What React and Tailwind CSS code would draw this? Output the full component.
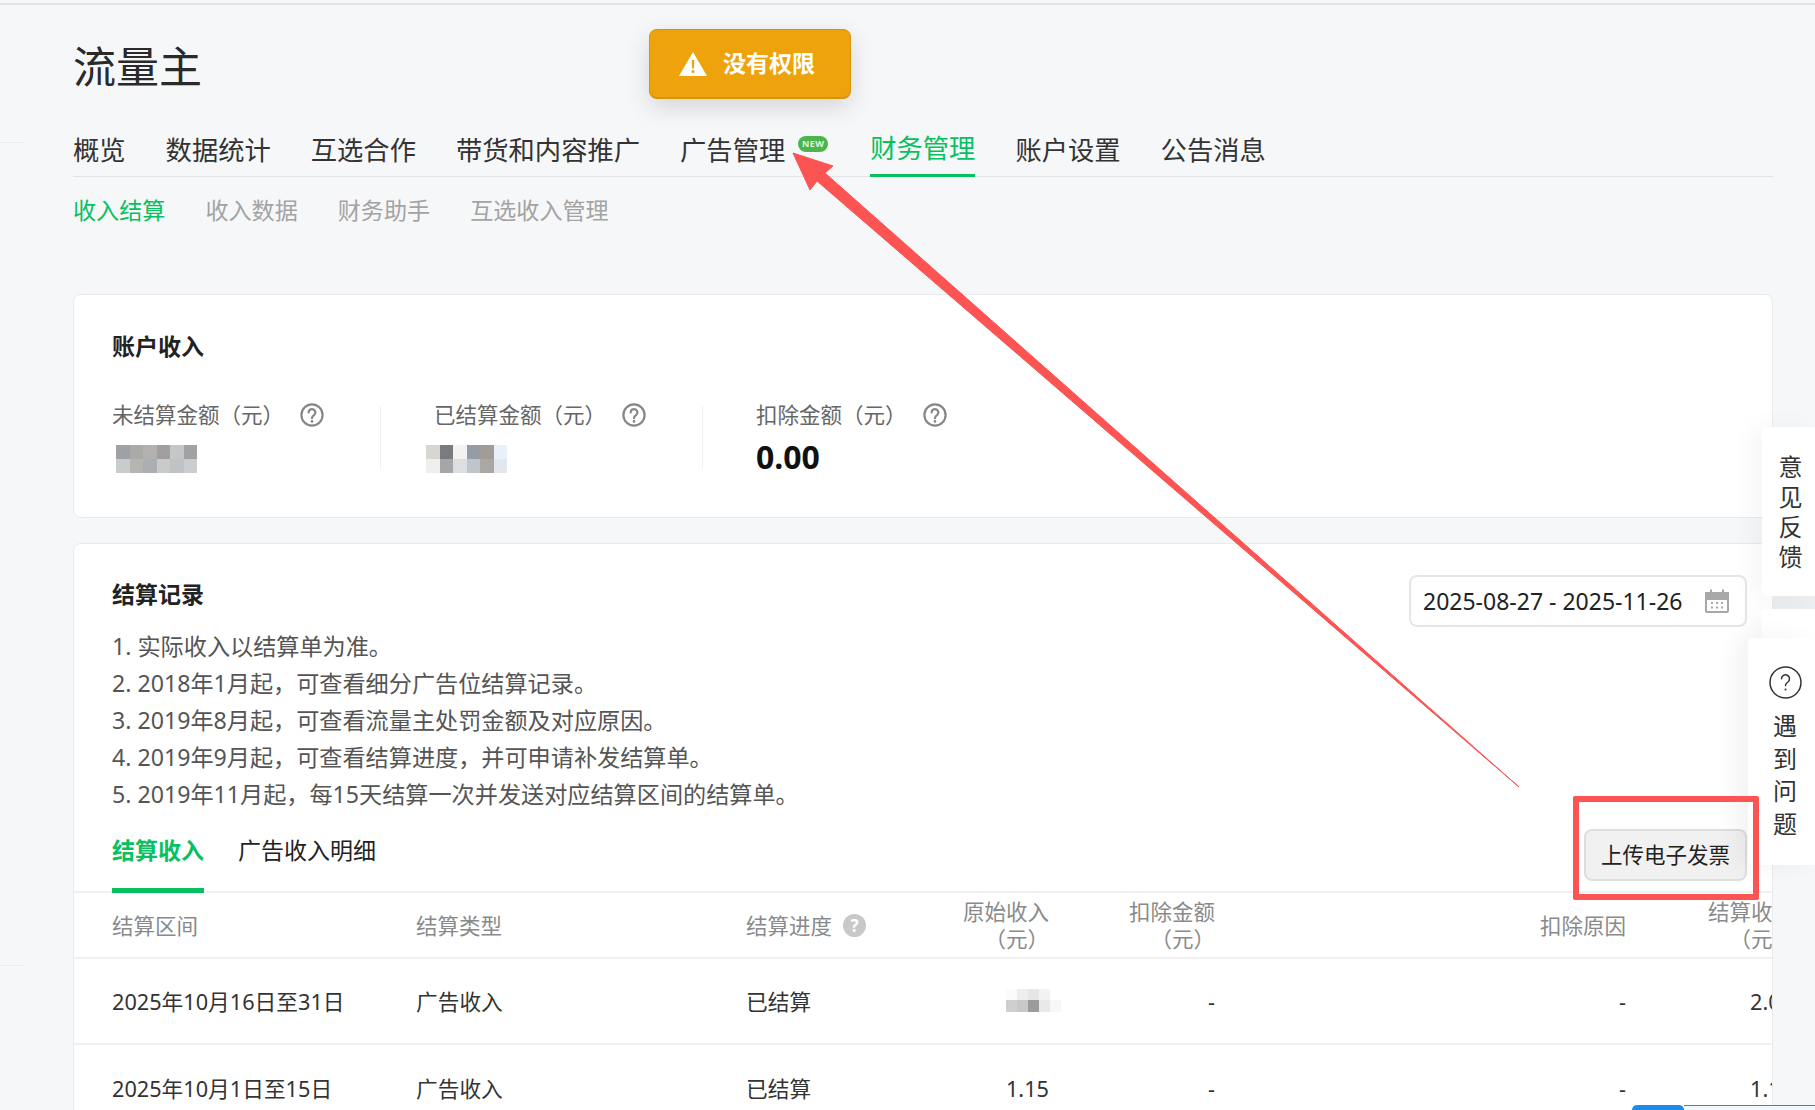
import React from "react";

const FONT = '"Noto Sans","Noto Sans CJK SC",sans-serif';

function Q({ className = "" }) {
  return (
    <svg viewBox="0 0 24 24" className={className} fill="none">
      <circle cx="12" cy="12" r="10.6" stroke="#868686" strokeWidth="2.2" />
      <path d="M8.6 9.4a3.4 3.4 0 1 1 5.4 2.8c-1.3.9-2 1.5-2 3" stroke="#868686" strokeWidth="2.2" strokeLinecap="round" />
      <circle cx="12" cy="18.4" r="1.3" fill="#868686" />
    </svg>
  );
}

function Mosaic({ cells, className = "" }) {
  return <div className={"grid " + className}>{cells.map((c, i) => <div key={i} className={c} />)}</div>;
}

const blur1 = ["bg-[#9ea1a5]","bg-[#aaaaa8]","bg-[#b2b1af]","bg-[#a09e9e]","bg-[#c4c6c8]","bg-[#a2a2a3]","bg-[#c9cccd]","bg-[#b6b5b1]","bg-[#adaeb1]","bg-[#c9cbcb]","bg-[#c0c3c4]","bg-[#cbcdd0]"];
const blur2 = ["bg-[#d8d6d1]","bg-[#797b7f]","bg-[#f3f2f0]","bg-[#969ca5]","bg-[#a09c98]","bg-[#e8f0f9]","bg-[#f0efed]","bg-[#a5a6a8]","bg-[#dcdee1]","bg-[#bfc6cb]","bg-[#aaa7a4]","bg-[#e1e7ed]"];
const blur3 = ["bg-[#fbfbfb]","bg-[#eeeeee]","bg-[#e6e6e6]","bg-[#f2f2f2]","bg-[#ffffff]","bg-[#cfcfcf]","bg-[#c8c8c8]","bg-[#9c9c9c]","bg-[#e9e9e9]","bg-[#f7f7f7]"];

const navs = ["概览", "数据统计", "互选合作", "带货和内容推广", "广告管理"];
const subs = ["收入数据", "财务助手", "互选收入管理"];
const notes = [
  "1. 实际收入以结算单为准。",
  "2. 2018年1月起，可查看细分广告位结算记录。",
  "3. 2019年8月起，可查看流量主处罚金额及对应原因。",
  "4. 2019年9月起，可查看结算进度，并可申请补发结算单。",
  "5. 2019年11月起，每15天结算一次并发送对应结算区间的结算单。",
];
const COLS = "grid grid-cols-[304px_330px_200px_103px_166px_411px_1fr] pl-[38px] items-center";

function Stat({ label, icon }) {
  return (
    <div className="flex h-[24px] items-center">
      <span className="text-[21.5px] leading-[24px] text-[#666]">{label}</span>
      <Q className={icon} />
    </div>
  );
}

function Row({ period, amount, last, bordered }) {
  return (
    <div className={COLS + " h-[86px] pt-[3px] text-[21.7px] text-[#333]" + (bordered ? " border-b-2 border-[#f0f0f0]" : "")}>
      <div>{period}</div>
      <div>广告收入</div>
      <div>已结算</div>
      <div className="flex justify-end">{amount}</div>
      <div className="text-right">-</div>
      <div className="text-right">-</div>
      <div className="min-w-0 pl-[124px] whitespace-nowrap">{last}</div>
    </div>
  );
}

export default function App() {
  return (
    <div className="relative h-[1110px] overflow-hidden bg-[#f6f7f9] pt-[3px]" style={{ fontFamily: FONT }}>
      <div className="h-[2px] bg-[#e2e3e5]" />

      <div className="absolute left-0 top-[142px] h-px w-[25px] bg-[#ececee]" />
      <div className="absolute left-0 top-[965px] h-px w-[25px] bg-[#ececee]" />

      <div className="pl-[73px] pr-[42px]">
        <h1 className="pt-[35px] text-[43px] leading-[54px] font-normal text-[#2a2a2a]">流量主</h1>

        <div className="mt-[38px] flex h-[45px] items-start gap-10 border-b border-[#e2e3e6] text-[26.3px] leading-[36px] text-[#333]">
          {navs.map((n) => <div key={n}>{n}</div>)}
          <div className="relative -ml-10 w-0">
            <div className="absolute left-[13px] top-[4px] flex h-[16px] w-[30px] items-center justify-center rounded-full bg-[#4cb64c] text-[9px] font-bold tracking-[0.5px] text-[#dff3df]">NEW</div>
          </div>
          <div className="relative -mt-[2px] ml-[45px] h-[47px] text-[#07c160]">
            财务管理
            <div className="absolute bottom-0 left-0 right-0 h-[3px] bg-[#07c160]" />
          </div>
          <div>账户设置</div>
          <div>公告消息</div>
        </div>

        <div className="mt-[17px] flex gap-10 text-[23.1px] leading-[32px] text-[#a3a3a3]">
          <div className="text-[#07c160]">收入结算</div>
          {subs.map((s) => <div key={s}>{s}</div>)}
        </div>

        <section className="mt-[68px] h-[224px] rounded-lg border border-[#e9ebee] bg-white pl-[38px] pt-[35px]">
          <h2 className="text-[23px] font-bold leading-[32px] text-[#222]">账户收入</h2>
          <div className="mt-[41px] flex">
            <div className="w-[268px]">
              <Stat label="未结算金额（元）" icon="ml-[16px] h-[24px] w-[24px]" />
              <Mosaic cells={blur1} className="ml-[4px] mt-[18px] h-[28px] w-[81px] grid-cols-6 grid-rows-2" />
            </div>
            <div className="mt-[3px] h-[63px] w-px bg-[#eff0f2]" />
            <div className="w-[321px] pl-[53px]">
              <Stat label="已结算金额（元）" icon="ml-[16px] h-[24px] w-[24px]" />
              <Mosaic cells={blur2} className="-ml-[8px] mt-[18px] h-[28px] w-[81px] grid-cols-6 grid-rows-2" />
            </div>
            <div className="mt-[3px] h-[63px] w-px bg-[#eff0f2]" />
            <div className="pl-[53px]">
              <Stat label="扣除金额（元）" icon="ml-[16px] h-[24px] w-[24px]" />
              <div className="mt-[9px] text-[32px] font-bold leading-[42px] text-[#111]">0.00</div>
            </div>
          </div>
        </section>

        <section className="relative mt-[25px] h-[600px] overflow-hidden rounded-t-lg border border-[#e9ebee] bg-white">
          <div className="flex justify-between pl-[38px] pr-[25px] pt-[34px]">
            <div>
              <h2 className="text-[23px] font-bold leading-[32px] text-[#222]">结算记录</h2>
              <ul className="mt-[18px] text-[23.15px] leading-[37px] text-[#555]">
                {notes.map((n) => <li key={n}>{n}</li>)}
              </ul>
            </div>
            <div className="-mt-[3px] flex h-[52px] w-[338px] items-center justify-between rounded-lg border-2 border-[#e6e6e6] bg-white pl-[12px] pr-[16px] text-[23px] text-[#222]">
              <span>2025-08-27 - 2025-11-26</span>
              <svg viewBox="0 0 24 24" className="h-[24px] w-[24px]" fill="none" stroke="#a8a8a8" strokeWidth="2">
                <rect x="1" y="4" width="22" height="19" rx="1" />
                <path d="M1 4h22v6H1Z" fill="#a8a8a8" />
                <path d="M6 0.5v5M18 0.5v5" />
                <path d="M6 14h2M11 14h2M16 14h2M6 18.5h2M11 18.5h2M16 18.5h2" strokeWidth="2.2" />
              </svg>
            </div>
          </div>

          <div className="mt-[15px] flex h-[65px] items-start justify-between border-b-2 border-[#f0f0f0] pl-[38px] pr-[25px] text-[23px] leading-[32px] text-[#222]">
            <div className="flex gap-[34px] pt-[6px]">
              <div className="relative h-[57px] font-bold text-[#07c160]">
                结算收入
                <div className="absolute -bottom-[2px] left-0 right-0 h-[5px] bg-[#07c160]" />
              </div>
              <div>广告收入明细</div>
            </div>
            <button className="mt-[1px] h-[52px] w-[163px] rounded-lg border-2 border-[#dedede] bg-[#f1f1f1] text-[21.5px] text-[#222]">上传电子发票</button>
          </div>

          <div className={COLS + " h-[66px] border-b-2 border-[#f0f0f0] text-[21.5px] leading-[27px] text-[#8a8a8a]"}>
            <div>结算区间</div>
            <div>结算类型</div>
            <div className="flex items-center gap-[11px]">
              结算进度
              <span className="flex h-[23px] w-[23px] items-center justify-center rounded-full bg-[#c8c8c8] text-[17px] font-bold leading-none text-white">?</span>
            </div>
            <div className="text-right whitespace-nowrap">原始收入<br />（元）</div>
            <div className="text-right whitespace-nowrap">扣除金额<br />（元）</div>
            <div className="text-right">扣除原因</div>
            <div className="min-w-0">
              <div className="ml-[81px] w-[87px] text-right whitespace-nowrap">结算收入<br />（元）</div>
            </div>
          </div>

          <Row period="2025年10月16日至31日" bordered last="2.06" amount={<Mosaic cells={blur3} className="-mr-[12px] -mt-[5px] h-[23px] w-[55px] grid-cols-5 grid-rows-2" />} />
          <Row period="2025年10月1日至15日" last="1.15" amount="1.15" />
        </section>
      </div>

      <div className="absolute right-0 top-[596px] h-[13px] w-[42px] bg-[#eceff2]" />
      <div className="absolute right-0 top-[427px] flex h-[169px] w-[53px] flex-col items-center justify-center rounded-l bg-white pl-[4px] text-[24px] leading-[30px] text-[#333] shadow-[-10px_0_24px_rgba(0,0,0,0.04)]">
        <span>意</span><span>见</span><span>反</span><span>馈</span>
      </div>
      <div className="absolute right-0 top-[609px] h-[40px] w-[53px] bg-white shadow-[-10px_0_24px_rgba(0,0,0,0.03)]" />
      <div className="absolute right-0 top-[638px] flex h-[227px] w-[67px] flex-col items-center rounded-l bg-white pl-[7px] pt-[28px] text-[24px] leading-[32.5px] text-[#333] shadow-[-12px_0_24px_rgba(0,0,0,0.05)]">
        <svg viewBox="0 0 33 33" className="mb-[11px] h-[33px] w-[33px]" fill="none" stroke="#333" strokeWidth="1.5">
          <circle cx="16.5" cy="16.5" r="15.5" />
          <path d="M12.5 12.8a4 4 0 1 1 6.4 3.2c-1.5 1-2.4 1.8-2.4 3.5" strokeLinecap="round" />
          <circle cx="16.5" cy="23.4" r="1" fill="#333" stroke="none" />
        </svg>
        <span>遇</span><span>到</span><span>问</span><span>题</span>
      </div>

      <div className="absolute left-[649px] top-[29px] flex h-[70px] w-[202px] items-center gap-[16px] rounded-lg border border-b-2 border-[#d49510] bg-[#eea30d] pl-[29px] text-[23px] font-bold text-white shadow-[0_8px_24px_rgba(0,0,0,0.14)]">
        <svg viewBox="0 0 28 24" className="h-[24px] w-[28px]">
          <path d="M14 0 28 24H0Z" fill="#fff" />
          <path d="M12.7 8h2.6l-.4 8.4h-1.8Z" fill="#eea30d" />
          <circle cx="14" cy="19.6" r="1.5" fill="#eea30d" />
        </svg>
        没有权限
      </div>

      <div className="absolute left-[1573px] top-[796px] h-[104px] w-[186px] rounded-[2px] border-[6px] border-[#fc5353]" />

      <svg className="pointer-events-none absolute left-0 top-0 h-[1110px] w-[1815px]" viewBox="0 0 1815 1110">
        <path d="M793 153 833 166 825 173 1519 787 817 181 810 190Z" fill="#fc5353" stroke="#fc5353" strokeWidth="1" strokeLinejoin="round" />
      </svg>

      <div className="absolute bottom-0 left-[1632px] right-0 flex h-[5px]">
        <div className="w-[52px] rounded-t-full bg-[#1a8cf0]" />
        <div className="flex-1 border-t border-[#1a8cf0] bg-[#eef8fe]" />
      </div>
    </div>
  );
}
